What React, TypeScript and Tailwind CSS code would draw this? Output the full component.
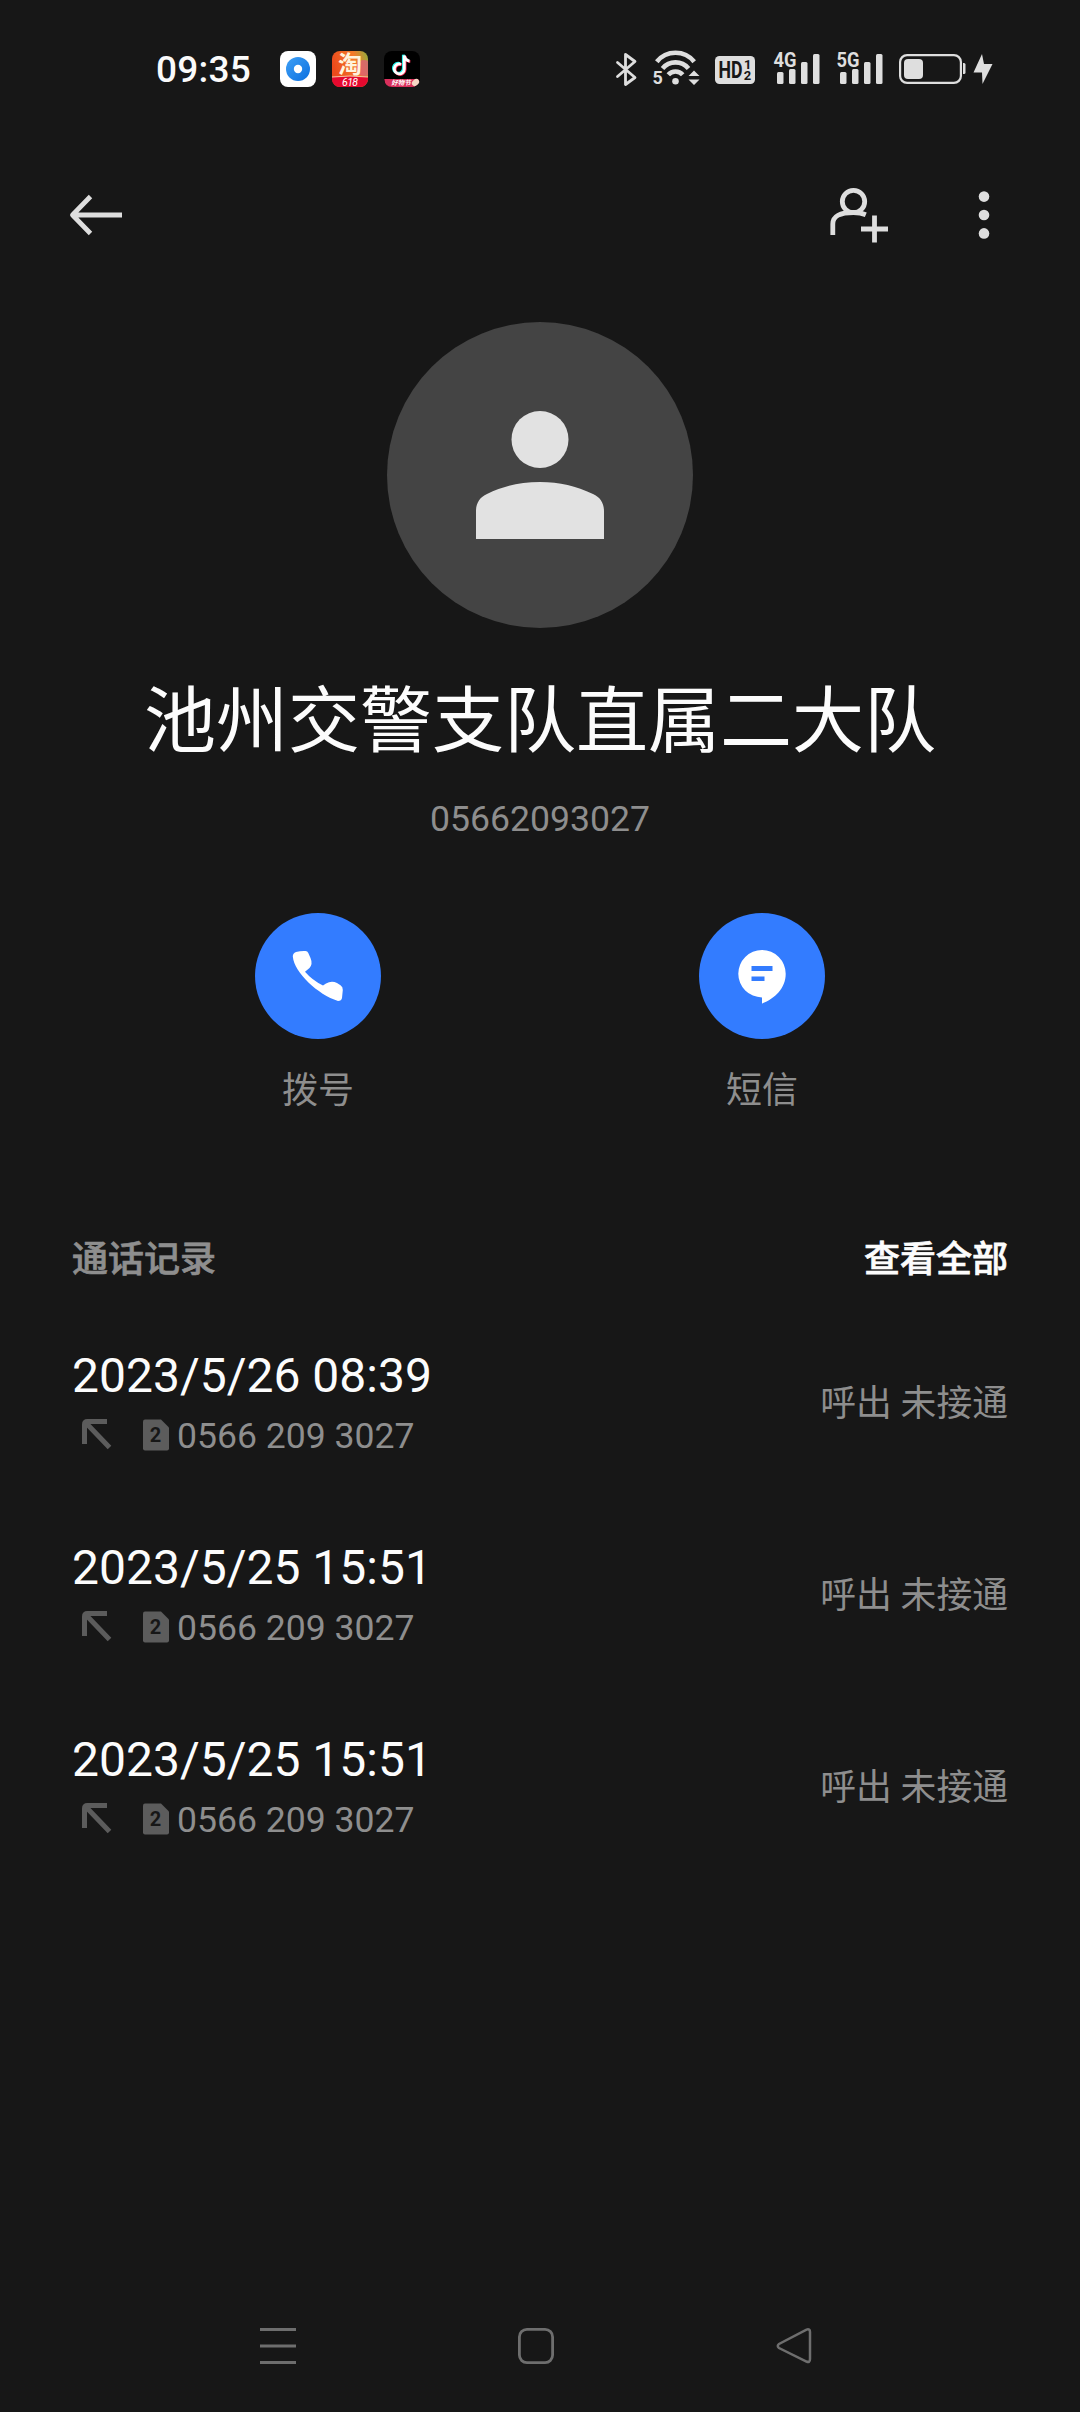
import type { ReactNode } from "react";

type Call = {
    time: string;
    number: string;
    sim: number;
    status: string;
};

const calls: Call[] = [
    { time: "2023/5/26 08:39", number: "0566 209 3027", sim: 2, status: "呼出 未接通" },
    { time: "2023/5/25 15:51", number: "0566 209 3027", sim: 2, status: "呼出 未接通" },
    { time: "2023/5/25 15:51", number: "0566 209 3027", sim: 2, status: "呼出 未接通" },
];

function Signal({ label }: { label: string }) {
    return (
        <svg className="overflow-visible" width="48" height="40" viewBox="0 0 48 40" fill="#dedede">
            <text x="0.5" y="17.2" fontSize="21" fontWeight="700" textLength="23" lengthAdjust="spacingAndGlyphs" className="font-['Roboto']">
                {label}
            </text>
            <rect x="4" y="22" width="6.5" height="12" rx="1.5" />
            <rect x="16" y="19" width="6.5" height="15" rx="1.5" />
            <rect x="28" y="12" width="6.5" height="22" rx="1.5" />
            <rect x="40" y="4" width="6.5" height="30" rx="1.5" />
        </svg>
    );
}

function AppIcons() {
    return (
        <div className="flex gap-4">
            <svg width="36" height="36" viewBox="0 0 36 36">
                <defs>
                    <linearGradient id="eye" x1="0" y1="0" x2="1" y2="1">
                        <stop offset="0" stopColor="#3fa0f5" />
                        <stop offset="1" stopColor="#0a6fe0" />
                    </linearGradient>
                </defs>
                <rect width="36" height="36" rx="8" fill="#fff" />
                <circle cx="18" cy="18" r="12" fill="url(#eye)" />
                <circle cx="18" cy="18" r="4.2" fill="#fff" />
            </svg>
            <svg className="overflow-visible" width="36" height="36" viewBox="0 0 36 36">
                <defs>
                    <linearGradient id="tao" x1="0" y1="0.3" x2="1" y2="0">
                        <stop offset="0" stopColor="#ec4a1c" />
                        <stop offset="0.6" stopColor="#f47a2a" />
                        <stop offset="1" stopColor="#8fae3c" />
                    </linearGradient>
                    <clipPath id="tile">
                        <rect width="36" height="36" rx="8" />
                    </clipPath>
                </defs>
                <g clipPath="url(#tile)">
                    <rect width="36" height="36" fill="url(#tao)" />
                    <circle cx="32" cy="17" r="8" fill="#e8508a" opacity="0.6" />
                    <path d="M0 26Q18 24 36 26V36H0Z" fill="#e5092f" />
                    <path d="M0 26Q18 24 36 26" stroke="#f8c7a0" strokeWidth="1" fill="none" />
                </g>
                <text x="18" y="21.5" fontSize="24" fontWeight="700" fill="#fff3dc" textAnchor="middle" className="font-['Noto_Sans_CJK_SC']">
                    淘
                </text>
                <text x="18" y="34.8" fontSize="10.5" fontStyle="italic" fill="#fff" textAnchor="middle" textLength="16" className="font-['Roboto']">
                    618
                </text>
            </svg>
            <svg className="overflow-visible" width="36" height="36" viewBox="0 0 36 36">
                <rect width="36" height="36" rx="8" fill="#000" />
                <path d="M0.3 28H33Q35 28 35 30Q33 36 28 36H8Q1 36 0.3 28Z" fill="#d8305c" />
                <ellipse cx="31.5" cy="31.5" rx="4" ry="3" fill="#f6d6c4" transform="rotate(-40 31.5 31.5)" />
                <text x="17" y="34.4" fontSize="6.5" fontWeight="700" fontStyle="italic" fill="#fff" textAnchor="middle" className="font-['Noto_Sans_CJK_SC']">
                    好物节
                </text>
                <g fill="none" strokeWidth="2.8">
                    <path d="M17 13.2a5 5 0 1 0 3.3 4.8V4.5c.5 3.3 2.6 5.2 5.2 5.5" stroke="#25f4ee" transform="translate(-1 -.7)" />
                    <path d="M17 13.2a5 5 0 1 0 3.3 4.8V4.5c.5 3.3 2.6 5.2 5.2 5.5" stroke="#fe2c55" transform="translate(.8 .6)" />
                    <path d="M17 13.2a5 5 0 1 0 3.3 4.8V4.5c.5 3.3 2.6 5.2 5.2 5.5" stroke="#fff" />
                </g>
            </svg>
        </div>
    );
}

function StatusBar() {
    return (
        <div className="flex h-[140px] items-center justify-between pr-[86px] pl-[156px]">
            <div className="-mt-0.5 flex items-center">
                <span className="w-[124px] text-[37px] leading-none font-medium tracking-[0.2px] text-[#fafafa]">09:35</span>
                <AppIcons />
            </div>
            <div className="flex items-center">
                <svg width="24" height="40" viewBox="0 0 24 40" fill="none" stroke="#dedede" strokeWidth="2.8" strokeLinejoin="round" strokeLinecap="round">
                    <path d="M2.5 12.5L20 27.5L10.5 34.5V4.5L20 11.5L2.5 26.5" />
                </svg>
                <svg className="ml-[13px] overflow-visible" width="49" height="40" viewBox="0 0 49 40" fill="none" stroke="#dedede">
                    <path d="M4.8 11.7a24 24 0 0 1 37.4 0" strokeWidth="4.6" />
                    <path d="M10.5 18.4a17 17 0 0 1 26 0" strokeWidth="4.6" />
                    <path d="M16.3 24.8a9.5 9.5 0 0 1 14.4 0" strokeWidth="4.6" />
                    <circle cx="23.5" cy="31.2" r="3.3" fill="#dedede" stroke="none" />
                    <text x="0.5" y="34.2" fontSize="18" fontWeight="700" fill="#dedede" stroke="none" className="font-['Roboto']">
                        5
                    </text>
                    <path d="M36.5 26L42 20.5L47.5 26ZM36.5 29.5L42 35L47.5 29.5Z" fill="#dedede" stroke="none" />
                </svg>
                <svg className="ml-[14px] overflow-visible" width="40" height="40" viewBox="0 0 40 40">
                    <rect y="6" width="40" height="28" rx="4.5" fill="#dedede" />
                    <g fill="#171717" fontWeight="700" className="font-['Roboto']">
                        <text x="3.5" y="28.3" fontSize="23.5" textLength="24" lengthAdjust="spacingAndGlyphs">
                            HD
                        </text>
                        <text x="29" y="18.8" fontSize="13">
                            1
                        </text>
                        <text x="28.7" y="30.4" fontSize="13">
                            2
                        </text>
                    </g>
                </svg>
                <div className="ml-[18px] flex gap-[15px]">
                    <Signal label="4G" />
                    <Signal label="5G" />
                </div>
                <svg className="ml-[14px]" width="96" height="40" viewBox="0 0 96 40" fill="#dedede">
                    <rect x="2.1" y="5.1" width="60.8" height="27.8" rx="7" fill="none" stroke="#dedede" strokeWidth="2.2" />
                    <rect x="6" y="9" width="19" height="20" rx="4" />
                    <path d="M65 13h1a1.5 1.5 0 0 1 1.5 1.5v8a1.5 1.5 0 0 1-1.5 1.5h-1Z" />
                    <path d="M84 4L75.5 22.5H84L84.5 34L94.5 14H86Z" strokeLinejoin="round" />
                </svg>
            </div>
        </div>
    );
}

function Toolbar() {
    return (
        <div className="flex h-[150px] items-center justify-between pr-[76px] pl-[68px]">
            <button aria-label="返回">
                <svg width="56" height="56" viewBox="0 0 56 56" fill="none" stroke="#dedede" strokeWidth="4.8">
                    <path d="M54 28H5M22.5 9.5L4.5 28L22.5 46.5" strokeLinejoin="round" />
                </svg>
            </button>
            <div className="flex items-center gap-[72px]">
                <button aria-label="新建联系人">
                    <svg width="64" height="60" viewBox="0 0 64 60" fill="none" stroke="#dedede" strokeWidth="4.8">
                        <circle cx="25.5" cy="16.5" r="11.2" />
                        <path d="M4.8 50V39C4.8 31 12 27.5 25.5 27.5C31 27.5 35 28.5 37.8 29.7M46.5 30.5V57.5M33 44H60" />
                    </svg>
                </button>
                <button aria-label="更多">
                    <svg width="40" height="60" viewBox="0 0 40 60" fill="#dedede">
                        <circle cx="20" cy="11.6" r="5.3" />
                        <circle cx="20" cy="30" r="5.3" />
                        <circle cx="20" cy="48.4" r="5.3" />
                    </svg>
                </button>
            </div>
        </div>
    );
}

function Avatar() {
    return (
        <div className="mt-8 flex size-[306px] items-center justify-center self-center rounded-full bg-[#444444]">
            <svg width="128" height="128" viewBox="0 0 128 128" fill="#e2e2e2">
                <circle cx="64" cy="28.5" r="28.5" />
                <path d="M0 128V100C0 92 4 86 11 83C28 75 44 71 64 71C84 71 100 75 117 83C124 86 128 92 128 100V128Z" />
            </svg>
        </div>
    );
}

function Action({ label, children }: { label: string; children: ReactNode }) {
    return (
        <button className="flex w-[126px] flex-col items-center gap-[28px]">
            <span className="flex size-[126px] items-center justify-center rounded-full bg-[#337cff]">
                {children}
            </span>
            <span className="text-4xl leading-[48px] text-[#8e8e8e]">{label}</span>
        </button>
    );
}

function CallRow({ call }: { call: Call }) {
    return (
        <li className="flex h-48 items-center justify-between">
            <div className="-mt-0.5">
                <div className="text-[48px] leading-[64px] text-[#fcfcfc]">{call.time}</div>
                <div className="mt-1 flex h-12 items-center text-[35.6px] leading-[48px] text-[#8e8e8e]">
                    <svg className="-mt-[5px] ml-[8px]" width="32" height="32" viewBox="0 0 32 32" fill="none" stroke="#5c5c5c" strokeWidth="5">
                        <path d="M4.5 26V6.5Q4.5 3.5 7.5 3.5H27M6 5L29.5 29.5" />
                    </svg>
                    <span className="-mt-[3px] mr-2 ml-[31px] flex">
                        <svg width="26" height="32" viewBox="0 0 26 32">
                            <path d="M2 .5H18L26 8.5V29.5Q26 31.5 24 31.5H2Q0 31.5 0 29.5V2.5Q0 .5 2 .5Z" fill="#5c5c5c" />
                            <text x="12.5" y="23.3" fontSize="20" fontWeight="700" textAnchor="middle" fill="#171717" className="font-['Roboto']">
                                {call.sim}
                            </text>
                        </svg>
                    </span>
                    {call.number}
                </div>
            </div>
            <span className="mt-0.5 text-[35.8px] leading-[48px] text-[#8e8e8e]">{call.status}</span>
        </li>
    );
}

function NavBar() {
    return (
        <div className="mt-auto flex h-[132px] items-center gap-[218px] pl-[258px]">
            <svg width="40" height="40" viewBox="0 0 40 40" stroke="#6e6e6e" strokeWidth="3">
                <path d="M2 3.5H38M2 20H38M2 36.5H38" />
            </svg>
            <svg width="40" height="40" viewBox="0 0 40 40" fill="none" stroke="#6e6e6e" strokeWidth="2.8">
                <rect x="3.4" y="3.4" width="33.2" height="33.2" rx="7.5" />
            </svg>
            <svg width="40" height="40" viewBox="0 0 40 40" fill="none" stroke="#6e6e6e" strokeWidth="2.5">
                <path d="M32.5 3.6Q36 2.5 36 6V33Q36 37 32.5 35.5L5 22Q2.5 20 5 18Z" />
            </svg>
        </div>
    );
}

export default function App() {
    return (
        <div className="flex h-[2412px] w-[1080px] flex-col overflow-hidden bg-[#171717] font-['Roboto','Noto_Sans_CJK_SC',sans-serif]">
            <StatusBar />
            <Toolbar />
            <Avatar />
            <h1 className="mt-[46px] text-center text-7xl leading-[96px] text-[#fcfcfc]">池州交警支队直属二大队</h1>
            <p className="mt-[25px] text-center text-[35.6px] leading-[48px] text-[#8e8e8e]">05662093027</p>
            <div className="mt-[70px] flex justify-between px-[255px]">
                <Action label="拨号">
                    <svg width="52" height="52" viewBox="0 0 52 52" fill="#fff">
                        <path d="M4 2Q8.5.8 13.5 1Q15.500 1.200 16.300 3L18.500 8Q21 14 17.500 18L13 21.700Q20 30 31 35.500L34 33.500Q39.500 30.500 45 33L48.500 35.200Q51 36.800 50.800 40L50 48Q49.500 51 46 51C26 44.500 2.400 23 .8 6.500Q.8 3 4 2Z" />
                    </svg>
                </Action>
                <Action label="短信">
                    <svg width="52" height="56" viewBox="0 0 52 56">
                        <path d="M26 2A23.7 23.7 0 0 0 26 49.4V55.5C39 50.5 49.700 40 49.700 25.700A23.700 23.700 0 0 0 26 2Z" fill="#fff" />
                        <path d="M15.5 18H36.5V23H15.500ZM15.500 28.500H28.500V33H15.500Z" fill="#337cff" />
                    </svg>
                </Action>
            </div>
            <div className="mt-[121px] flex justify-between px-[72px] text-4xl leading-[48px] font-medium [-webkit-text-stroke:0.7px]">
                <h2 className="text-[#8e8e8e]">通话记录</h2>
                <button className="text-[#fcfcfc]">查看全部</button>
            </div>
            <ul className="mt-[23px] px-[72px]">
                {calls.map((call, i) => (
                    <CallRow key={i} call={call} />
                ))}
            </ul>
            <NavBar />
        </div>
    );
}
